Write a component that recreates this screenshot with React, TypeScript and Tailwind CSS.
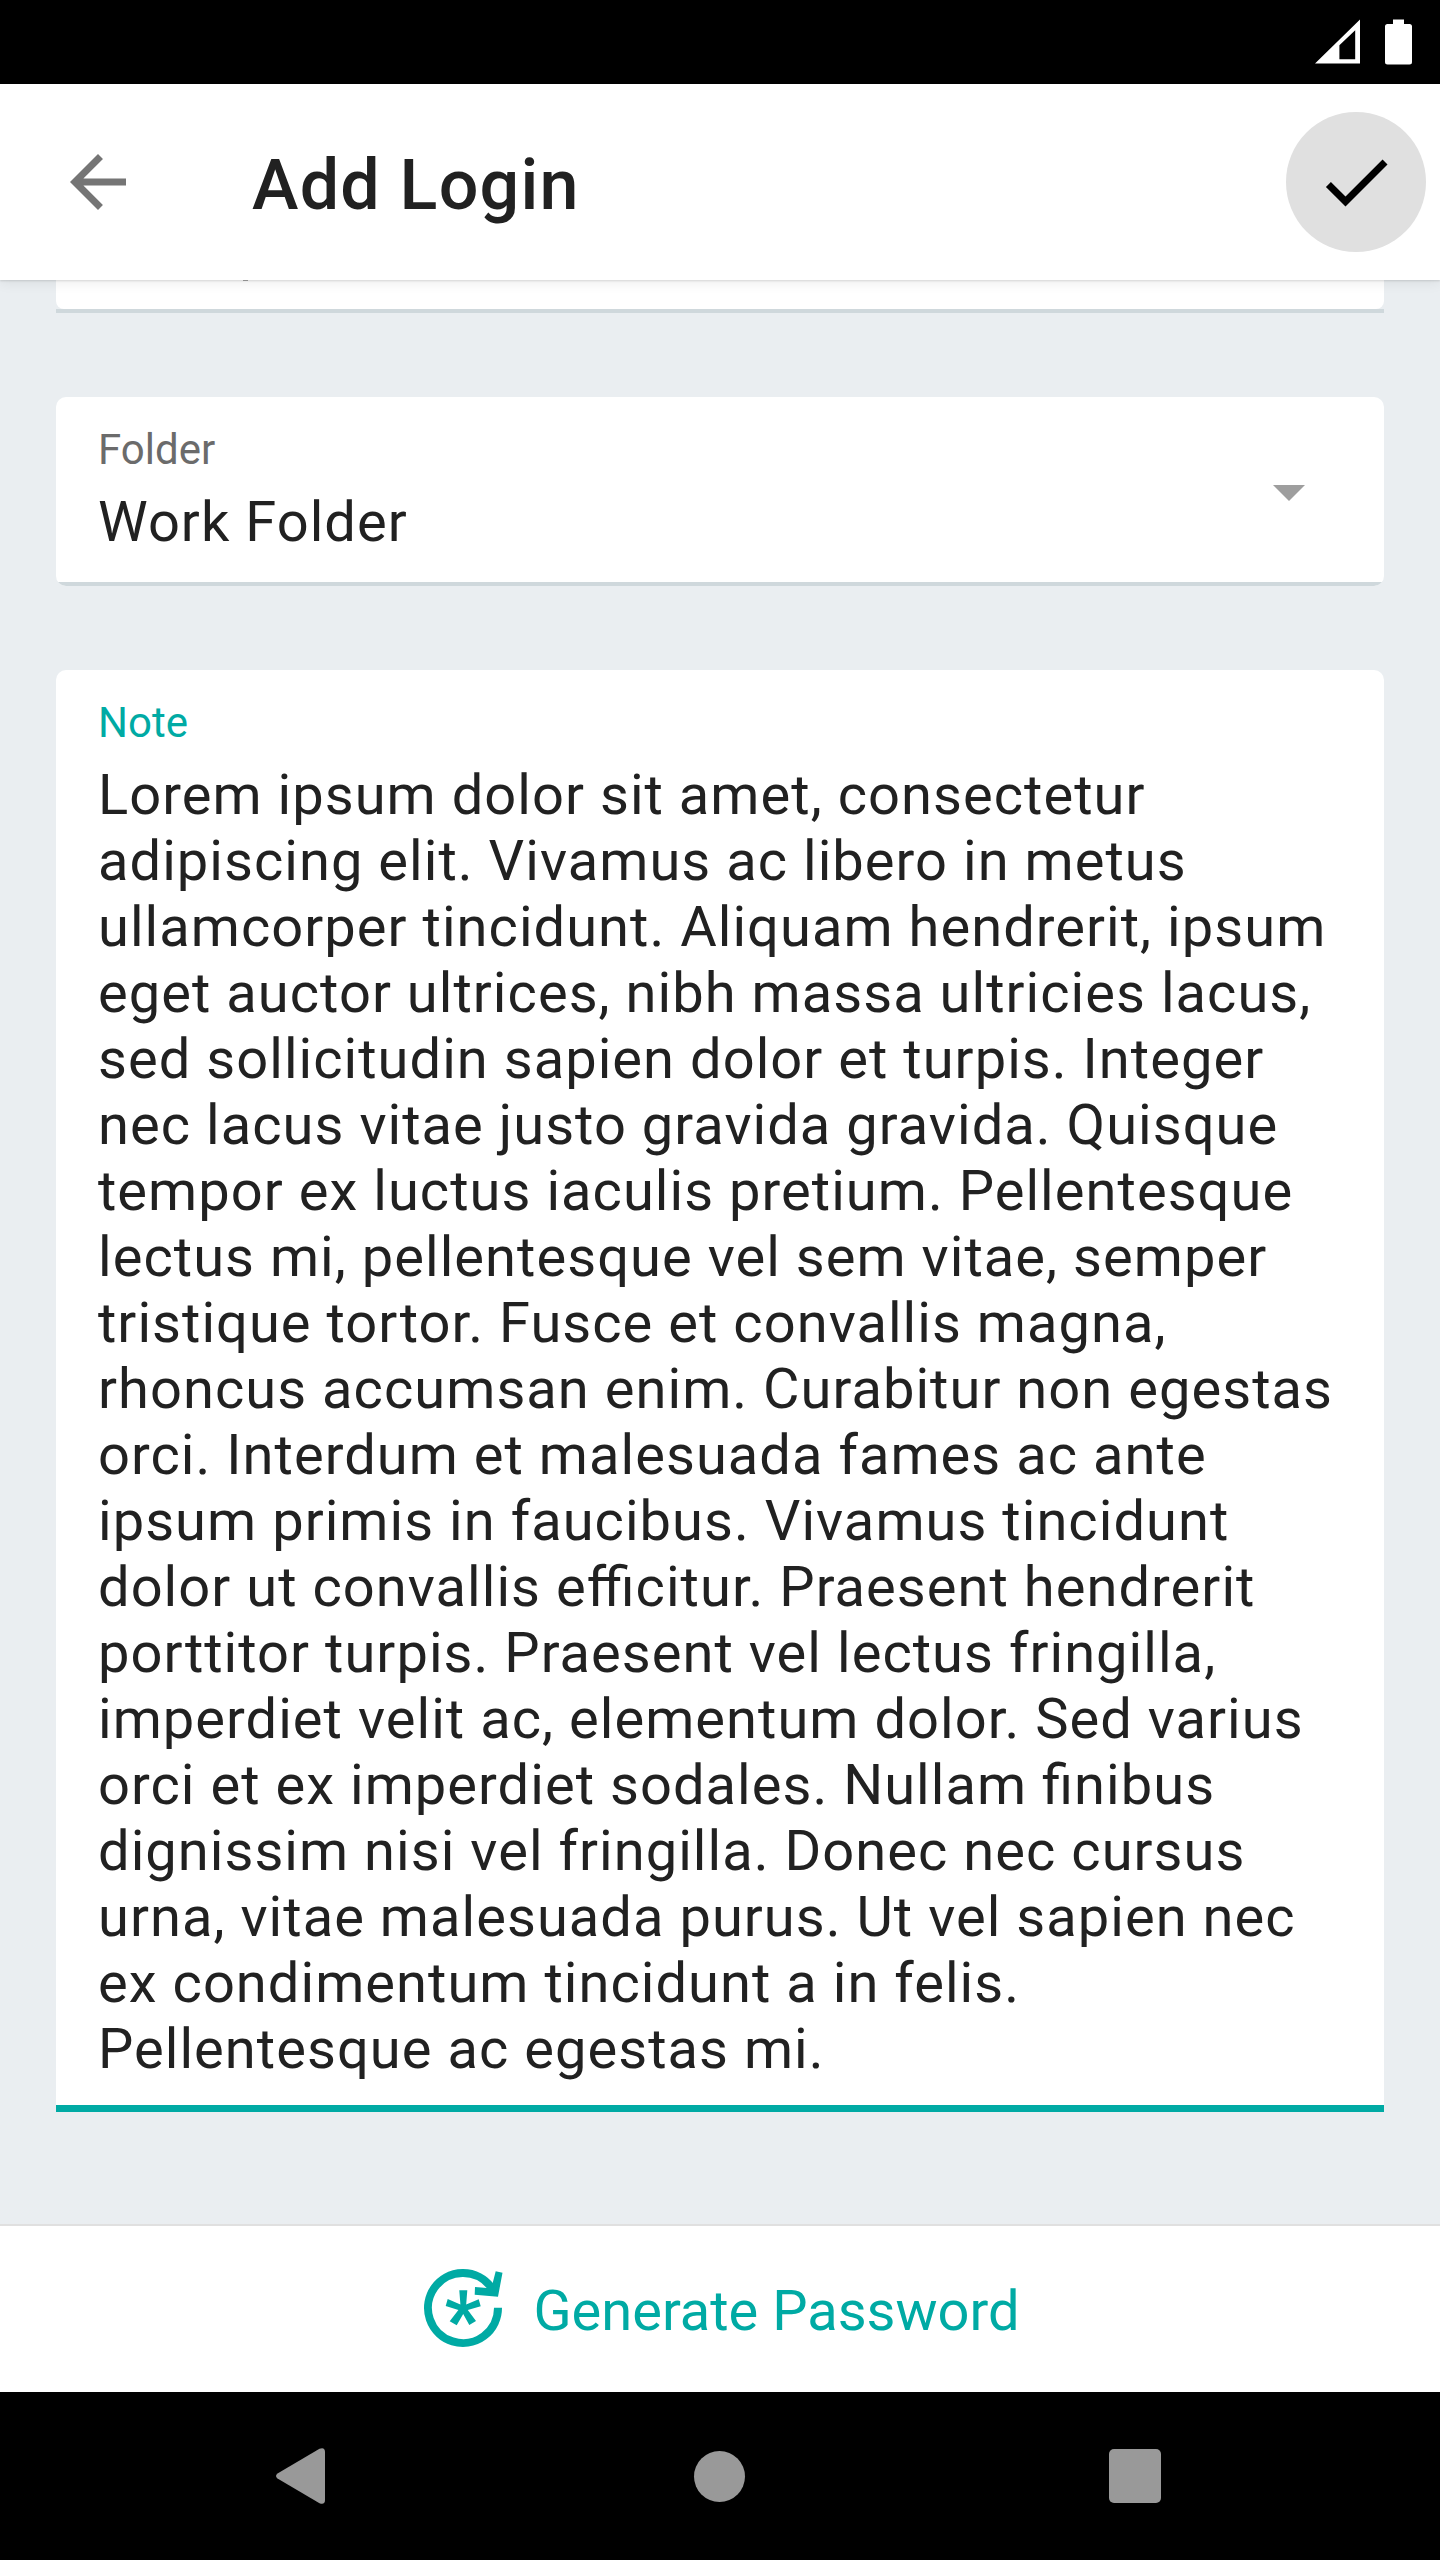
import React from "react";

const noteLines = [
  "Lorem ipsum dolor sit amet, consectetur",
  "adipiscing elit. Vivamus ac libero in metus",
  "ullamcorper tincidunt. Aliquam hendrerit, ipsum",
  "eget auctor ultrices, nibh massa ultricies lacus,",
  "sed sollicitudin sapien dolor et turpis. Integer",
  "nec lacus vitae justo gravida gravida. Quisque",
  "tempor ex luctus iaculis pretium. Pellentesque",
  "lectus mi, pellentesque vel sem vitae, semper",
  "tristique tortor. Fusce et convallis magna,",
  "rhoncus accumsan enim. Curabitur non egestas",
  "orci. Interdum et malesuada fames ac ante",
  "ipsum primis in faucibus. Vivamus tincidunt",
  "dolor ut convallis efficitur. Praesent hendrerit",
  "porttitor turpis. Praesent vel lectus fringilla,",
  "imperdiet velit ac, elementum dolor. Sed varius",
  "orci et ex imperdiet sodales. Nullam finibus",
  "dignissim nisi vel fringilla. Donec nec cursus",
  "urna, vitae malesuada purus. Ut vel sapien nec",
  "ex condimentum tincidunt a in felis.",
  "Pellentesque ac egestas mi.",
];

function StatusBar() {
  return (
    <div className="flex h-[84px] shrink-0 items-center justify-end gap-[25px] bg-black pr-[28px]">
      <svg className="h-[46px] w-[45px]" viewBox="0 0 45 46" fill="#fff">
        <path fillRule="evenodd" d="M0 44.6L45 .4V44.6zM24.4 26.2V40.3H40.2V11.3z" />
      </svg>
      <svg className="h-[46px] w-[27px]" viewBox="0 0 27 46" fill="#fff">
        <path d="M8 .5h11V5h5.500Q27 5 27 7.500V43Q27 45.500 24.500 45.500H2.500Q0 45.500 0 43V7.500Q0 5 2.500 5H8z" />
      </svg>
    </div>
  );
}

function AppBar() {
  return (
    <header className="relative z-10 flex h-[196px] shrink-0 items-center bg-white pl-14 pr-[14px] shadow-[0_1px_2px_rgba(0,0,0,0.13),0_3px_12px_rgba(0,0,0,0.07)]">
      <svg className="size-[84px]" viewBox="0 0 24 24" fill="#757575">
        <path d="M20 11H7.83l5.590-5.590L12 4l-8 8 8 8 1.410-1.410L7.830 13H20v-2z" />
      </svg>
      <h1 className="ml-[112px] mt-[5px] flex-1 text-[70px] leading-[82px] font-medium tracking-[1.225px]">Add Login</h1>
      <button className="flex size-[140px] items-center justify-center rounded-full bg-[#e0e0e0]">
        <svg className="size-[84px]" viewBox="0 0 24 24" fill="#000">
          <path d="M9 16.170L4.830 12l-1.420 1.410L9 19 21 7l-1.410-1.410z" />
        </svg>
      </button>
    </header>
  );
}

function NavBar() {
  return (
    <nav className="flex h-[168px] shrink-0 items-center justify-between bg-black pl-[276px] pr-[279px]">
      <svg className="h-14 w-[49px]" viewBox="0 0 49 56" fill="#999">
        <path d="M43.500.7Q49-1.200 49 4V52Q49 57.200 43.500 55.300L1.500 30.500Q-1.500 28 1.500 25.500z" />
      </svg>
      <span className="ml-[5px] size-[51px] rounded-full bg-[#999]" />
      <span className="h-[54px] w-[52px] rounded-[5px] bg-[#999]" />
    </nav>
  );
}

export default function App() {
  return (
    <div className="flex h-[2560px] w-[1440px] flex-col overflow-hidden bg-[#eaeef1] font-['Roboto',sans-serif] text-[#212121]">
      <StatusBar />
      <AppBar />
      <main className="flex flex-1 flex-col px-14">
        {/* Lower edge of the field scrolled under the app bar */}
        <div className="shrink-0 border-b-4 border-[#cfd8dc]">
          <div className="h-[29px] rounded-b-[8px] bg-white pl-[187px]">
            <div className="h-px w-[5px] bg-[#a6a6a6]" />
          </div>
        </div>
        <section className="mt-[84px] flex h-[189px] shrink-0 justify-between overflow-hidden rounded-[10px] bg-white">
          <div className="flex flex-1 justify-between border-b-4 border-[#cfd8dc] pt-7 pr-[79px] pl-[42px]">
            <div>
              <div className="text-[42px] leading-[50px] text-[#6b6b6b]">Folder</div>
              <div className="mt-[14px] text-[56px] leading-[66px] tracking-[1.050px]">Work Folder</div>
            </div>
            <svg className="mt-[60px] h-4 w-8" viewBox="0 0 32 16" fill="#9e9e9e">
              <path d="M0 0H32L16 16z" />
            </svg>
          </div>
        </section>
        <section className="mt-[84px] h-[1442px] shrink-0 rounded-t-[10px] border-b-[7px] border-[#00aaa4] bg-white px-[42px] pt-7">
          <div className="text-[42px] leading-[50px] text-[#00aaa4]">Note</div>
          <div className="mt-[14px] text-[56px] leading-[66px] tracking-[1.050px] whitespace-nowrap [font-feature-settings:'liga'_1]">
            {noteLines.map((line) => (
              <div key={line}>{line}</div>
            ))}
          </div>
        </section>
      </main>
      <footer className="flex h-[168px] shrink-0 items-center justify-center gap-[30px] border-t-2 border-[#e0e0e0] bg-white pl-[3px] text-[#00aaa4]">
        <svg className="mb-[2px] size-[80px]" viewBox="0 0 80 80" fill="currentColor">
          <path fill="none" stroke="currentColor" strokeWidth="8" d="M75 39.700A35 35 0 1 1 68 19" />
          <path d="M72.700 3.300L79.500 4.700 75 28.700 51.700 26.700 52 19 64 20 69.700 15z" />
          <path d="M36.300 22.300H44.300L43.200 36.500 55.700 31.300 57.700 38.300 44.800 42 53 53 46.300 57 40.200 46 33.700 57.300 26.700 53.300 35.400 42 22.700 38 24.700 31 37.400 36.500z" />
        </svg>
        <span className="mt-1 text-[56px] leading-[66px]">Generate Password</span>
      </footer>
      <NavBar />
    </div>
  );
}
